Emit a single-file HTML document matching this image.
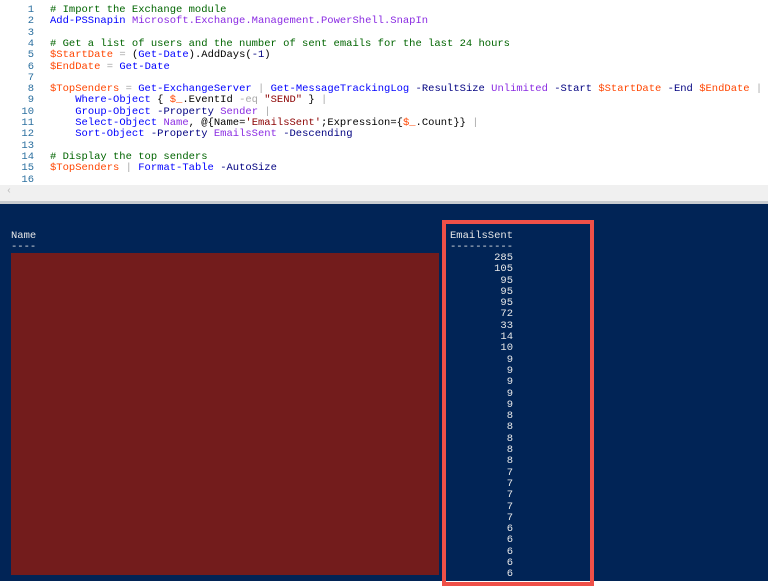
<!DOCTYPE html>
<html><head><meta charset="utf-8"><style>
body{margin:0;width:768px;height:581px;overflow:hidden;background:#fff;position:relative;font-family:"Liberation Mono",monospace;}
#ed{position:absolute;left:0;top:0;width:768px;height:185px;background:#fff;font-size:10.5px;}
.ln{position:absolute;left:0;width:34px;text-align:right;color:#2b6f9f;}
.l{position:absolute;height:11px;line-height:11px;white-space:pre;}
.c{color:#006400}.k{color:#0000ff}.v{color:#ff4500}.m{color:#8a2be2}.p{color:#000080}.s{color:#8b0000}.g{color:#a9a9a9}
#sb{position:absolute;left:0;top:185px;width:768px;height:16px;background:#f0f0f0;}
#sep{position:absolute;left:0;top:201px;width:768px;height:3px;background:#c8ccd0;}
#con{position:absolute;left:0;top:204px;width:768px;height:377px;background:#012456;color:#e8e8e8;font-size:10.5px;}
.t{position:absolute;white-space:pre;line-height:11px;}
#red{position:absolute;left:11px;top:49px;width:428px;height:322px;background:#731c1c;}
#box{position:absolute;left:442px;top:16px;width:144px;height:358px;border:4px solid #ef5048;}
</style></head><body>
<div id="ed">
<div style="position:absolute;left:0;top:5px">
<div class="l ln" style="top:0">1</div><div class="l" style="left:50px;top:0"><span class="c"># Import the Exchange module</span></div>
<div class="l ln" style="top:11.3px">2</div><div class="l" style="left:50px;top:11.3px"><span class="k">Add-PSSnapin</span> <span class="m">Microsoft.Exchange.Management.PowerShell.SnapIn</span></div>
<div class="l ln" style="top:22.6px">3</div>
<div class="l ln" style="top:33.9px">4</div><div class="l" style="left:50px;top:33.9px"><span class="c"># Get a list of users and the number of sent emails for the last 24 hours</span></div>
<div class="l ln" style="top:45.2px">5</div><div class="l" style="left:50px;top:45.2px"><span class="v">$StartDate</span> <span class="g">=</span> (<span class="k">Get-Date</span>).AddDays(<span class="p">-1</span>)</div>
<div class="l ln" style="top:56.5px">6</div><div class="l" style="left:50px;top:56.5px"><span class="v">$EndDate</span> <span class="g">=</span> <span class="k">Get-Date</span></div>
<div class="l ln" style="top:67.8px">7</div>
<div class="l ln" style="top:79.1px">8</div><div class="l" style="left:50px;top:79.1px"><span class="v">$TopSenders</span> <span class="g">=</span> <span class="k">Get-ExchangeServer</span> <span class="g">|</span> <span class="k">Get-MessageTrackingLog</span> <span class="p">-ResultSize</span> <span class="m">Unlimited</span> <span class="p">-Start</span> <span class="v">$StartDate</span> <span class="p">-End</span> <span class="v">$EndDate</span> <span class="g">|</span></div>
<div class="l ln" style="top:90.4px">9</div><div class="l" style="left:50px;top:90.4px">    <span class="k">Where-Object</span> { <span class="v">$_</span>.EventId <span class="g">-eq</span> <span class="s">"SEND"</span> } <span class="g">|</span></div>
<div class="l ln" style="top:101.7px">10</div><div class="l" style="left:50px;top:101.7px">    <span class="k">Group-Object</span> <span class="p">-Property</span> <span class="m">Sender</span> <span class="g">|</span></div>
<div class="l ln" style="top:113px">11</div><div class="l" style="left:50px;top:113px">    <span class="k">Select-Object</span> <span class="m">Name</span>, @{Name=<span class="s">'EmailsSent'</span>;Expression={<span class="v">$_</span>.Count}} <span class="g">|</span></div>
<div class="l ln" style="top:124.3px">12</div><div class="l" style="left:50px;top:124.3px">    <span class="k">Sort-Object</span> <span class="p">-Property</span> <span class="m">EmailsSent</span> <span class="p">-Descending</span></div>
<div class="l ln" style="top:135.6px">13</div>
<div class="l ln" style="top:146.9px">14</div><div class="l" style="left:50px;top:146.9px"><span class="c"># Display the top senders</span></div>
<div class="l ln" style="top:158.2px">15</div><div class="l" style="left:50px;top:158.2px"><span class="v">$TopSenders</span> <span class="g">|</span> <span class="k">Format-Table</span> <span class="p">-AutoSize</span></div>
<div class="l ln" style="top:169.5px">16</div>
</div>
</div>
<div id="sb"><span style="position:absolute;left:6px;top:1px;color:#bbb;font-size:10px">&lsaquo;</span></div>
<div id="sep"></div>
<div id="con">
<div class="t" style="left:11px;top:27px">Name
----</div>
<div id="red"></div>
<div id="box"></div>
<div class="t" style="left:450px;top:27px">EmailsSent
----------</div>
<div class="t" style="left:450px;top:49px;text-align:right;width:63px;line-height:11.3px">285
105
95
95
95
72
33
14
10
9
9
9
9
9
8
8
8
8
8
7
7
7
7
7
6
6
6
6
6</div>
</div>
</body></html>
